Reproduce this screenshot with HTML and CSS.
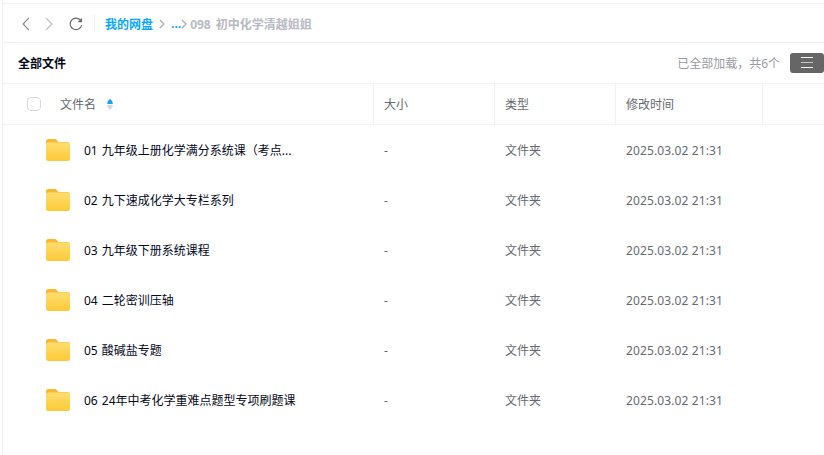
FILE: index.html
```html
<!DOCTYPE html>
<html lang="zh-CN">
<head>
<meta charset="utf-8">
<title>我的网盘</title>
<link rel="stylesheet" href="styles.css">
</head>
<body>
<svg class="defs" width="0" height="0">
  <defs>
    <linearGradient id="fg" x1="0" y1="0" x2="0" y2="1"><stop offset="0" stop-color="#ffde70"/><stop offset="1" stop-color="#ffc935"/></linearGradient>
    <symbol id="folder" viewBox="0 0 24 22">
      <path fill="#f9b830" d="M2.500 0h6c1 0 1.600.4 2.300 1.100L12.500 3H21.500A2.500 2.500 0 0 1 24 5.500V10H0V2.500A2.500 2.500 0 0 1 2.500 0z"/>
      <rect y="3.500" width="24" height="18.500" rx="2.200" fill="url(#fg)"/>
    </symbol>
  </defs>
</svg>
<div class="app">
  <nav class="nav">
    <svg class="nav-icon back" width="8" height="14" viewBox="0 0 8 14"><path d="M7 1 1 7l6 6" /></svg>
    <svg class="nav-icon forward" width="8" height="14" viewBox="0 0 8 14"><path d="M1 1l6 6-6 6" /></svg>
    <svg class="nav-icon reload" width="14" height="14" viewBox="0 0 14 14"><path d="M11.800 3.600A5.800 5.800 0 1 0 12.700 8" /><path class="fill" d="M13 .8v4.400H8.600z" /></svg>
    <span class="nav-sep"></span>
    <a class="crumb">我的网盘</a>
    <svg class="chev" width="6" height="10" viewBox="0 0 6 10"><path d="M1 1l4 4-4 4" /></svg>
    <a class="crumb dots">...</a>
    <svg class="chev tight" width="6" height="10" viewBox="0 0 6 10"><path d="M1 1l4 4-4 4" /></svg>
    <span class="crumb-current">098 初中化学清越姐姐</span>
  </nav>
  <header class="bar">
    <h1 class="bar-title">全部文件</h1>
    <span class="bar-count">已全部加载，共6个</span>
    <button class="view-btn" type="button"><span></span><span class="mid"></span><span></span></button>
  </header>
  <div class="table">
    <div class="row head">
      <div class="cell name-head">
        <span class="check"></span>
        <span class="head-label">文件名</span>
        <svg class="sort" width="6" height="11" viewBox="0 0 6 11"><path class="up" d="M3 0C4 1 5.800 2.600 5.800 4a.8.8 0 0 1-.8 1H1a.8.8 0 0 1-.8-1C.2 2.600 2 1 3 0z" /><path class="down" d="M1 6h4a.8.8 0 0 1 .8.8C5.800 8.200 4 10 3 11 2 10 .2 8.200.2 6.800A.8.8 0 0 1 1 6z" /></svg>
      </div>
      <div class="cell">大小</div>
      <div class="cell">类型</div>
      <div class="cell">修改时间</div>
      <div class="cell"></div>
    </div>
    <div class="row item">
      <div class="cell name"><svg class="folder" width="24" height="22"><use href="#folder"/></svg><span>01 九年级上册化学满分系统课（考点...</span></div>
      <div class="cell">-</div><div class="cell">文件夹</div><div class="cell date">2025.03.02 21:31</div><div class="cell"></div>
    </div>
    <div class="row item">
      <div class="cell name"><svg class="folder" width="24" height="22"><use href="#folder"/></svg><span>02 九下速成化学大专栏系列</span></div>
      <div class="cell">-</div><div class="cell">文件夹</div><div class="cell date">2025.03.02 21:31</div><div class="cell"></div>
    </div>
    <div class="row item">
      <div class="cell name"><svg class="folder" width="24" height="22"><use href="#folder"/></svg><span>03 九年级下册系统课程</span></div>
      <div class="cell">-</div><div class="cell">文件夹</div><div class="cell date">2025.03.02 21:31</div><div class="cell"></div>
    </div>
    <div class="row item">
      <div class="cell name"><svg class="folder" width="24" height="22"><use href="#folder"/></svg><span>04 二轮密训压轴</span></div>
      <div class="cell">-</div><div class="cell">文件夹</div><div class="cell date">2025.03.02 21:31</div><div class="cell"></div>
    </div>
    <div class="row item">
      <div class="cell name"><svg class="folder" width="24" height="22"><use href="#folder"/></svg><span>05 酸碱盐专题</span></div>
      <div class="cell">-</div><div class="cell">文件夹</div><div class="cell date">2025.03.02 21:31</div><div class="cell"></div>
    </div>
    <div class="row item">
      <div class="cell name"><svg class="folder" width="24" height="22"><use href="#folder"/></svg><span>06 24年中考化学重难点题型专项刷题课</span></div>
      <div class="cell">-</div><div class="cell">文件夹</div><div class="cell date">2025.03.02 21:31</div><div class="cell"></div>
    </div>
  </div>
</div>
</body>
</html>
```
FILE: styles.css
```css
* { box-sizing: border-box; }
html, body { margin: 0; height: 100%; background: #fff; overflow: hidden; }
body {
  font-family: "Noto Sans", "Noto Sans CJK SC", sans-serif;
  font-size: 12px;
  color: #03081a;
}
.defs { display: block; height: 0; }
.app {
  height: 100%;
  margin-left: 2px;
  padding-top: 3px;
  border-left: 1px solid #f1f2f4;
}
.nav {
  display: flex;
  align-items: center;
  height: 40px;
  border-top: 1px solid #f1f2f4;
  border-bottom: 1px solid #f1f2f4;
  padding: 1px 0 0 19px;
}
.nav-icon { fill: none; stroke: #8b8e94; stroke-width: 1.200; }
.nav-icon.forward { margin-left: 15px; stroke: #bfc2c7; }
.nav-icon.reload { margin-left: 16px; stroke: #6a6c70; }
.nav-icon .fill { fill: #6a6c70; stroke: none; }
.nav-sep { width: 1px; height: 16px; background: #eef0f6; margin: -1px 10px 0 11px; }
.crumb { color: #06a7ff; font-weight: 700; }
.dots { margin-left: 6px; }
.chev { fill: none; stroke: #a9acb3; stroke-width: 1.200; margin-left: 6px; }
.chev.tight { margin-left: 0; }
.crumb-current { color: #b8bac5; font-weight: 700; margin-left: 3px; word-spacing: 2px; }
.bar {
  display: flex;
  align-items: center;
  height: 41px;
  border-bottom: 1px solid #f1f2f4;
  padding-left: 15px;
}
.bar-title { margin: 0; font-size: 12px; font-weight: 700; color: #03081a; flex: 1; }
.bar-count { color: #999ba1; margin-right: 10px; }
.view-btn {
  display: flex;
  flex-direction: column;
  justify-content: center;
  gap: 4px;
  width: 34px;
  height: 20px;
  border: 0;
  padding: 0 0 0 11px;
  border-radius: 3px;
  background: #666;
  margin-bottom: 1px;
}
.view-btn span { display: block; width: 12px; height: 1px; background: #f4f4f4; }
.view-btn .mid { background: #c4c4c4; }
.row { display: grid; grid-template-columns: 371px 121px 121px 147px 1fr; }
.cell { display: flex; align-items: center; padding-left: 10px; }
.head { height: 41px; border-bottom: 1px solid #f1f2f4; color: #666a72; }
.head .cell { border-right: 1px solid #f1f2f4; }
.head .cell:last-child { border-right: 0; }
.name-head.cell { padding-left: 24px; }
.check { width: 14px; height: 14px; border: 1px solid #d8d9dc; border-radius: 4px; margin-right: 19px; }
.sort { margin-left: 11px; }
.sort .up { fill: #06a7ff; }
.sort .down { fill: #d4d7de; }
.item { height: 50px; color: #666a72; }
.name.cell { padding-left: 43px; color: #03081a; word-spacing: 1px; }
.date { letter-spacing: .12px; }
.folder { flex: none; margin-right: 14px; }
```
